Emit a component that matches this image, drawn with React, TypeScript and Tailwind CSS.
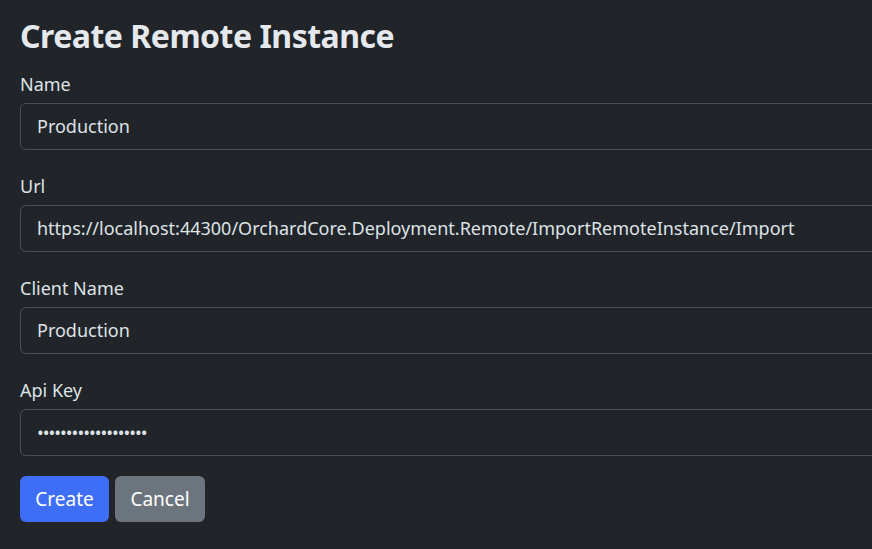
export default function App() {
  const fields = [
    ["Name", "Production"],
    ["Url", "https://localhost:44300/OrchardCore.Deployment.Remote/ImportRemoteInstance/Import"],
    ["Client Name", "Production"],
    ["Api Key", "•••••••••••••••••••"],
  ];
  return (
    <div className="w-[872px] h-[549px] overflow-hidden bg-[#212529] text-[#dee2e6] pl-5 pt-[14px]" style={{ fontFamily: '"Noto Sans", sans-serif' }}>
      <h1 className="text-[32px] font-bold leading-[44px] mb-[14px] text-[#e5e8ec] tracking-[-0.5px]">Create Remote Instance</h1>
      {fields.map(([l, v]) => (
        <div key={l} className="mb-[24px]">
          <div className="text-[18px] leading-[24px] mb-[7px]">{l}</div>
          <div className="w-[900px] h-[47px] border border-[#495057] rounded-md flex items-center px-4 text-[18px]">
            <span className={l === "Api Key" ? "tracking-[-1px]" : ""}>{v}</span>
          </div>
        </div>
      ))}
      <div className="flex gap-[6px] -mt-[4px]">
        <button className="h-[46px] w-[89px] rounded-md bg-[#3e6ef5] text-white text-[19px]">Create</button>
        <button className="h-[46px] w-[90px] rounded-md bg-[#6c757d] text-white text-[19px]">Cancel</button>
      </div>
    </div>
  );
}
